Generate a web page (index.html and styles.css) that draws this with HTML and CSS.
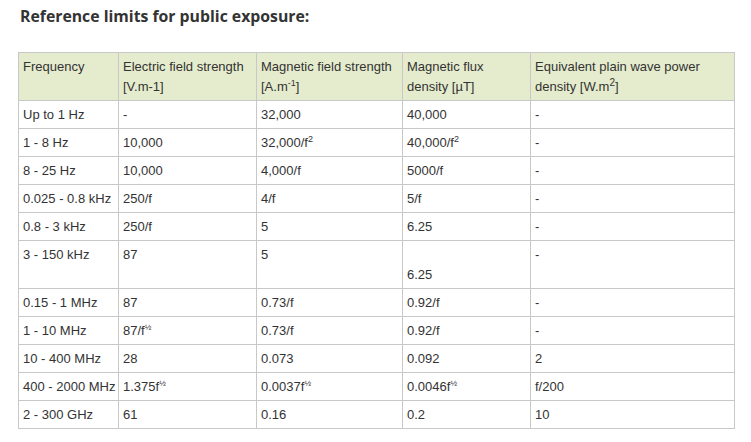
FILE: index.html
```html
<!DOCTYPE html>
<html>
<head>
<meta charset="utf-8">
<link rel="stylesheet" href="styles.css">
</head>
<body>
<h3 class="title">Reference limits for public exposure:</h3>
<table class="limits">
<colgroup>
<col class="c1"><col class="c2"><col class="c3"><col class="c4"><col class="c5">
</colgroup>
<thead>
<tr><th>Frequency</th><th>Electric field strength [V.m-1]</th><th>Magnetic field strength [A.m<sup>-1</sup>]</th><th>Magnetic flux density [µT]</th><th>Equivalent plain wave power density [W.m<sup class="big">2</sup>]</th></tr>
</thead>
<tbody>
<tr><td>Up to 1 Hz</td><td>-</td><td>32,000</td><td>40,000</td><td>-</td></tr>
<tr><td>1 - 8 Hz</td><td>10,000</td><td>32,000/f<sup>2</sup></td><td>40,000/f<sup>2</sup></td><td>-</td></tr>
<tr><td>8 - 25 Hz</td><td>10,000</td><td>4,000/f</td><td>5000/f</td><td>-</td></tr>
<tr><td>0.025 - 0.8 kHz</td><td>250/f</td><td>4/f</td><td>5/f</td><td>-</td></tr>
<tr><td>0.8 - 3 kHz</td><td>250/f</td><td>5</td><td>6.25</td><td>-</td></tr>
<tr><td>3 - 150 kHz</td><td>87</td><td>5</td><td><br>6.25</td><td>-</td></tr>
<tr><td>0.15 - 1 MHz</td><td>87</td><td>0.73/f</td><td>0.92/f</td><td>-</td></tr>
<tr><td>1 - 10 MHz</td><td>87/f<sup class="half">½</sup></td><td>0.73/f</td><td>0.92/f</td><td>-</td></tr>
<tr><td>10 - 400 MHz</td><td>28</td><td>0.073</td><td>0.092</td><td>2</td></tr>
<tr><td>400 - 2000 MHz</td><td>1.375f<sup class="half">½</sup></td><td>0.0037f<sup class="half">½</sup></td><td>0.0046f<sup class="half">½</sup></td><td>f/200</td></tr>
<tr><td>2 - 300 GHz</td><td>61</td><td>0.16</td><td>0.2</td><td>10</td></tr>
</tbody>
</table>
</body>
</html>
```
FILE: styles.css
```css
html, body {
  margin: 0;
  padding: 0;
  background: #ffffff;
}
body {
  padding: 5px 17px 0 18px;
}
.title {
  font-family: "Open Sans", sans-serif;
  font-weight: 700;
  font-size: 15.8px;
  line-height: 22px;
  color: #333333;
  margin: 0 0 25px 2px;
}
.limits {
  border-collapse: collapse;
  table-layout: fixed;
  width: 716px;
  font-family: "Liberation Sans", Arial, sans-serif;
  font-size: 13px;
  line-height: 20px;
  color: #333333;
}
.c1 { width: 100px; }
.c2 { width: 138px; }
.c3 { width: 146px; }
.c4 { width: 128px; }
.c5 { width: 204px; }
.limits th,
.limits td {
  border: 1px solid #c8c8c8;
  padding: 4px 4px 3px 4px;
  text-align: left;
  vertical-align: top;
  font-weight: 400;
}
.limits th {
  background: #e5eccd;
}
.limits td {
  white-space: nowrap;
}
.limits sup {
  font-size: 9px;
  line-height: 0;
  vertical-align: 5px;
}
.limits sup.big {
  font-size: 10px;
}
.limits sup.half {
  font-size: 8px;
  letter-spacing: -0.5px;
  vertical-align: 5px;
}
```
